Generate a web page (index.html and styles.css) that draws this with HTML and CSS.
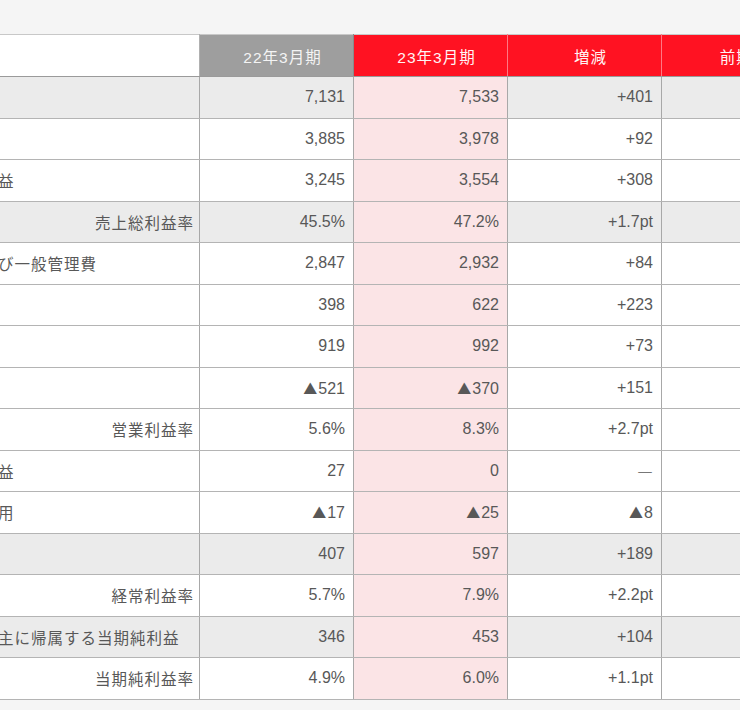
FILE: index.html
```html
<!DOCTYPE html>
<html lang="ja">
<head>
<meta charset="utf-8">
<title>業績</title>
<link rel="stylesheet" href="styles.css">
</head>
<body>
<div class="wrap">
<table class="pl">
  <colgroup>
    <col class="c-label"><col class="c-num"><col class="c-num"><col class="c-num"><col class="c-num">
  </colgroup>
  <thead>
    <tr>
      <th class="blank"></th>
      <th class="prev">22年3月期</th>
      <th class="cur">23年3月期</th>
      <th class="cur">増減</th>
      <th class="cur">前期比</th>
    </tr>
  </thead>
  <tbody>
    <tr class="shade"><td class="lbl">売上高</td><td>7,131</td><td class="hl">7,533</td><td>+401</td><td></td></tr>
    <tr><td class="lbl">売上原価</td><td>3,885</td><td class="hl">3,978</td><td>+92</td><td></td></tr>
    <tr><td class="lbl">売上総利益</td><td>3,245</td><td class="hl">3,554</td><td>+308</td><td></td></tr>
    <tr class="shade"><td class="lbl rt">売上総利益率</td><td>45.5%</td><td class="hl">47.2%</td><td>+1.7pt</td><td></td></tr>
    <tr><td class="lbl">販売費及び一般管理費</td><td>2,847</td><td class="hl">2,932</td><td>+84</td><td></td></tr>
    <tr><td class="lbl">営業利益</td><td>398</td><td class="hl">622</td><td>+223</td><td></td></tr>
    <tr><td class="lbl">事業利益</td><td>919</td><td class="hl">992</td><td>+73</td><td></td></tr>
    <tr><td class="lbl">全社費用</td><td><span class="tri">▲</span>521</td><td class="hl"><span class="tri">▲</span>370</td><td>+151</td><td></td></tr>
    <tr><td class="lbl rt">営業利益率</td><td>5.6%</td><td class="hl">8.3%</td><td>+2.7pt</td><td></td></tr>
    <tr><td class="lbl">営業外収益</td><td>27</td><td class="hl">0</td><td><span class="dash">―</span></td><td></td></tr>
    <tr><td class="lbl">営業外費用</td><td><span class="tri">▲</span>17</td><td class="hl"><span class="tri">▲</span>25</td><td><span class="tri">▲</span>8</td><td></td></tr>
    <tr class="shade"><td class="lbl">経常利益</td><td>407</td><td class="hl">597</td><td>+189</td><td></td></tr>
    <tr><td class="lbl rt">経常利益率</td><td>5.7%</td><td class="hl">7.9%</td><td>+2.2pt</td><td></td></tr>
    <tr class="shade"><td class="lbl">親会社株主に帰属する当期純利益</td><td>346</td><td class="hl">453</td><td>+104</td><td></td></tr>
    <tr><td class="lbl rt">当期純利益率</td><td>4.9%</td><td class="hl">6.0%</td><td>+1.1pt</td><td></td></tr>
  </tbody>
</table>
</div>
</body>
</html>
```

FILE: styles.css
```css
html, body {
  margin: 0;
  padding: 0;
  background: #f5f5f5;
  overflow: hidden;
}
.wrap {
  padding-top: 34px;
  width: 740px;
  overflow: hidden;
}
.pl {
  margin-left: -72px;
  border-collapse: collapse;
  table-layout: fixed;
  width: 887px;
  background: #ffffff;
  font-family: "Liberation Sans", "Noto Sans CJK JP", sans-serif;
  font-size: 16px;
  color: #585858;
}
.c-label { width: 271px; }
.c-num { width: 154px; }
.pl th {
  height: 41px;
  padding: 0 0 0 12px;
  font-weight: normal;
  font-size: 15.5px;
  letter-spacing: 1px;
  text-align: center;
  color: #f4f4f4;
  border: 1px solid #c8c8c8;
  border-bottom-color: #9a9a9a;
}
.pl th.blank {
  background: #ffffff;
  border-right-color: #b0b0b0;
}
.pl th.prev {
  background: #9e9e9e;
  border-right-color: #8a8a8a;
}
.pl th.cur {
  background: #ff1222;
  border-left-color: #ff7884;
  border-right-color: #ff7884;
  color: #fff4f4;
}
.pl td {
  height: 40.5px;
  padding: 0 8px 0 0;
  text-align: right;
  border: 1px solid #a8a8a8;
  border-top-color: #b4b4b4;
  border-bottom-color: #b4b4b4;
  white-space: nowrap;
  overflow: hidden;
}
.pl td.lbl {
  text-align: left;
  font-family: "Noto Sans CJK JP", sans-serif;
  font-size: 15.5px;
  letter-spacing: 1px;
  padding-left: 3px;
  padding-right: 5px;
}
.pl td.lbl.rt {
  text-align: right;
}
.tri {
  font-family: "Noto Sans CJK JP", sans-serif;
  font-size: 14px;
  margin-right: 1px;
}
.dash {
  font-family: "Noto Sans CJK JP", sans-serif;
  font-size: 16px;
}
.pl tr.shade td {
  background: #ebebeb;
}
.pl td.hl,
.pl tr.shade td.hl {
  background: #fbe4e6;
}
```
